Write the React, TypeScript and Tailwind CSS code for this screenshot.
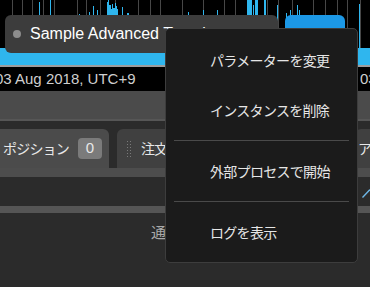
const grid = [12, 22, 32, 43, 54, 77, 86, 100, 115, 138, 150, 160, 182, 203, 224, 235, 247, 267, 278, 292, 313, 325, 337, 347, 360];

const bars: [number, number, number][] = [
  [39, 2, 1], [50, 0, 1], [79, 14, 1], [89, 12, 1], [93, 6, 1], [97, 10, 1],
  [107, 2, 1], [108, 0, 1], [109, 5, 2], [111, 9, 1], [112, 4, 1], [113, 8, 2],
  [115, 3, 1], [116, 6, 1], [117, 9, 1], [122, 7, 1], [127, 13, 2], [188, 12, 1],
  [203, 10, 1], [217, 10, 1], [247, 0, 5], [253, 5, 1], [255, 0, 3], [264, 0, 2],
  [277, 5, 1], [286, 13, 1], [290, 10, 1], [297, 5, 1], [299, 10, 1], [359, 4, 1],
];

const menuItems = [["パラメーターを変更", "インスタンスを削除"], ["外部プロセスで開始"], ["ログを表示"]];

const jp = "font-['Noto_Sans_CJK_JP',sans-serif]";

const Chart = () => (
  <svg width="370" height="65" className="block">
    <rect width="370" height="65" fill="#000" />
    {grid.map((x) => (
      <rect key={x} x={x} y={0} width={1} height={65} fill="#474747" />
    ))}
    {bars.map(([x, y, w], i) => (
      <rect key={i} x={x} y={y} width={w} height={65 - y} fill="#2fb6ee" />
    ))}
    <rect x={0} y={48} width={370} height={17} fill="#2fb6ee" />
  </svg>
);

export default function App() {
  return (
    <div className="relative w-[370px] h-[287px] overflow-hidden bg-[#2b2b2b] font-['Liberation_Sans',sans-serif]">
      <div className="relative h-[65px]">
        <Chart />
        <div className="absolute left-[5px] top-[15px] w-[273px] h-[38px] rounded-[6px] bg-[#3c3c3c] flex items-center pl-[8px]">
          <div className="w-[8px] h-[8px] rounded-full bg-[#8c8c8c]" />
          <span className="ml-[9px] text-[16px] text-white whitespace-nowrap">Sample Advanced Template</span>
        </div>
        <div className="absolute left-[285px] top-[15px] w-[60px] h-[30px] rounded-[6px] bg-[#1c98e6]" />
      </div>
      <div className="h-[2px] bg-[#9c9c9c]" />
      <div className="h-[24px] bg-black flex items-center text-[15px] text-[#cfcfcf] whitespace-nowrap">
        <span className="ml-[-5px]">03 Aug 2018, UTC+9</span>
        <span className="ml-auto w-[10px] overflow-hidden">03</span>
      </div>
      <div className="h-[28px] bg-[#4b4b4b]" />
      <div className="h-[2px] bg-[#565656]" />
      <div className="h-[8px]" />
      <div className={`h-[39px] flex gap-[8px] text-[14px] tracking-[-0.8px] text-[#e8e8e8] whitespace-nowrap ${jp}`}>
        <div className="w-[109px] shrink-0 bg-[#4b4b4b] rounded-tr-[6px] flex items-center pl-[3px]">
          <span>ポジション</span>
          <span className="ml-[9px] w-[24px] h-[21px] rounded-[4px] bg-[#7b7b7b] flex items-center justify-center text-[15px] tracking-normal font-['Liberation_Sans',sans-serif]">0</span>
        </div>
        <div className="w-[230px] shrink-0 bg-[#404040] rounded-t-[6px] flex items-center pl-[10px]">
          <div className="grid grid-cols-2 gap-x-[2px] gap-y-[2px]">
            {Array.from({ length: 12 }).map((_, i) => (
              <div key={i} className="w-[1px] h-[1px] bg-[#7a7a7a]" />
            ))}
          </div>
          <span className="ml-[10px]">注文</span>
        </div>
        <div className="flex-1 bg-[#404040] rounded-tl-[6px] flex items-center pl-[3px]">
          <span>アクティビティ</span>
        </div>
      </div>
      <div className="h-[9px] bg-[#4d4d4d]" />
      <div className="h-[29px] flex items-start pl-[362px] pt-[12px]">
        <svg width="8" height="9" viewBox="0 0 8 9">
          <line x1="0.5" y1="8.5" x2="8" y2="0.5" stroke="#6fb8e8" strokeWidth="1.3" />
        </svg>
      </div>
      <div className="h-[7px] bg-[#555555]" />
      <div className={`pl-[151px] pt-[8px] text-[15px] text-[#a8a8a8] ${jp}`}>通知はありません</div>

      <div className={`absolute left-[165px] top-[28px] w-[193px] h-[235px] bg-[#1b1b1b] border border-[#3d3d3d] rounded-[5px] pt-[6px] text-[14px] tracking-[-0.7px] text-[#e6e6e6] ${jp}`}>
        {menuItems.map((group, gi) => (
          <div key={gi}>
            {gi > 0 && <div className="mx-2 my-[5px] h-px bg-[#4a4a4a]" />}
            {group.map((label) => (
              <div key={label} className="h-[50px] flex items-center pl-[44px]">
                {label}
              </div>
            ))}
          </div>
        ))}
      </div>
    </div>
  );
}
